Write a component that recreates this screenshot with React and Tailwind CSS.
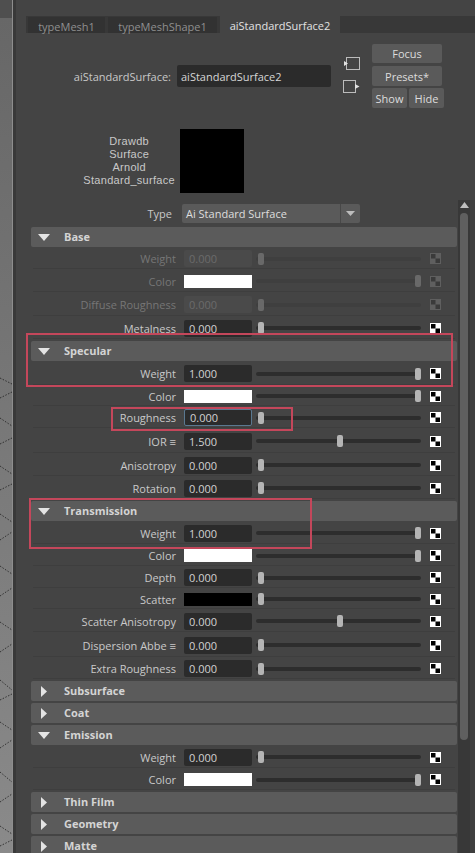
import React from 'react';

const font = "font-['Open_Sans','Liberation_Sans',sans-serif]";

const sections = [
  {
    title: 'Base',
    open: true,
    rows: [
      { label: 'Weight', value: '0.000', pos: 0, h: 22, dim: true },
      { label: 'Color', color: '#ffffff', pos: 1, h: 23, dim: true },
      { label: 'Diffuse Roughness', value: '0.000', pos: 0, h: 24, dim: true },
      { label: 'Metalness', value: '0.000', pos: 0, h: 23 },
    ],
  },
  {
    title: 'Specular',
    open: true,
    rows: [
      { label: 'Weight', value: '1.000', pos: 1, h: 24 },
      { label: 'Color', color: '#ffffff', pos: 1, h: 21 },
      { label: 'Roughness', value: '0.000', pos: 0, h: 22, focus: true },
      { label: 'IOR ≡', value: '1.500', pos: 0.5, h: 25 },
      { label: 'Anisotropy', value: '0.000', pos: 0, h: 23 },
      { label: 'Rotation', value: '0.000', pos: 0, h: 23 },
    ],
  },
  {
    title: 'Transmission',
    open: true,
    rows: [
      { label: 'Weight', value: '1.000', pos: 1, h: 23 },
      { label: 'Color', color: '#ffffff', pos: 1, h: 22 },
      { label: 'Depth', value: '0.000', pos: 0, h: 22 },
      { label: 'Scatter', color: '#000000', pos: 0, h: 21 },
      { label: 'Scatter Anisotropy', value: '0.000', pos: 0.5, h: 23 },
      { label: 'Dispersion Abbe ≡', value: '0.000', pos: 0, h: 25 },
      { label: 'Extra Roughness', value: '0.000', pos: 0, h: 22 },
    ],
  },
  { title: 'Subsurface' },
  { title: 'Coat' },
  {
    title: 'Emission',
    open: true,
    rows: [
      { label: 'Weight', value: '0.000', pos: 0, h: 23 },
      { label: 'Color', color: '#ffffff', pos: 1, h: 22 },
    ],
  },
  { title: 'Thin Film' },
  { title: 'Geometry' },
  { title: 'Matte' },
];

// wireframe edges visible in the viewport strip
const wires = [
  [378, 384], [398, 392], [418, 426], [444, 438], [466, 474], [490, 484],
  [514, 522], [540, 532], [566, 574], [596, 588], [622, 630], [652, 644],
  [680, 690], [700, 694], [722, 730], [748, 740], [772, 782], [802, 794],
  [826, 834], [846, 840],
];

function MapButton({ dim }) {
  const light = dim ? '#5f5f5f' : '#ffffff';
  const dark = dim ? '#3a3a3a' : '#000000';
  return (
    <svg width="11" height="11" viewBox="0 0 11 11">
      <rect width="11" height="11" fill={light} />
      <rect x="1" y="1" width="4.5" height="4.5" fill={dark} />
      <rect x="5.5" y="5.5" width="4.5" height="4.5" fill={dark} />
    </svg>
  );
}

function Slider({ pos, dim }) {
  return (
    <div className="relative ml-[4px] h-[12px] w-[165px]">
      <div
        className={`absolute left-0 right-0 top-[4px] h-[4px] rounded-full ${
          dim ? 'bg-[#3f3f3f]' : 'bg-[#2d2d2d]'
        }`}
      />
      <div
        className={`absolute top-0 h-[12px] w-[6px] rounded-[2px] ${
          dim ? 'bg-[#696969]' : 'bg-[#b4b4b4]'
        }`}
        style={{ left: 2 + pos * 157 }}
      />
    </div>
  );
}

function AttrRow({ row }) {
  const { label, value, color, pos, h, dim, focus } = row;
  return (
    <div
      className="flex items-center border-b border-[#3e3e3e] pt-[2px]"
      style={{ height: h }}
    >
      <div
        className={`w-[143px] pt-[2px] text-right text-[11px] ${
          dim ? 'text-[#767676]' : 'text-[#c9c9c9]'
        }`}
      >
        {label}
      </div>
      {color ? (
        <div className="ml-[8px] h-[13px] w-[68px]" style={{ background: color }} />
      ) : (
        <div
          className={`ml-[8px] flex h-[17px] w-[68px] items-center rounded-[2px] pl-[5px] pt-[2px] text-[11px] ${
            dim ? 'bg-[#4a4a4a] text-[#6b6b6b]' : 'bg-[#2b2b2b] text-[#d2d2d2]'
          } ${focus ? 'border border-[#5a7890]' : ''}`}
        >
          {value}
        </div>
      )}
      <Slider pos={pos} dim={dim} />
      <div className="ml-[9px] flex">
        <MapButton dim={dim} />
      </div>
    </div>
  );
}

function Section({ section }) {
  return (
    <div className="flex flex-col">
      <div className="flex h-[20px] items-center rounded-[2px] bg-[#5b5b5b]">
        <div className="flex w-[26px] justify-center">
          {section.open ? (
            <svg width="12" height="7" viewBox="0 0 12 7">
              <polygon points="0,0 12,0 6,7" fill="#e4e4e4" />
            </svg>
          ) : (
            <svg width="6" height="11" viewBox="0 0 6 11">
              <polygon points="0,0 6,5.5 0,11" fill="#e4e4e4" />
            </svg>
          )}
        </div>
        <span className="pl-[7px] pt-[1px] text-[11px] font-bold text-[#d4d4d4]">
          {section.title}
        </span>
      </div>
      {section.open && (
        <div className="mx-[2px] flex flex-col">
          {section.rows.map((row, i) => (
            <AttrRow key={i} row={row} />
          ))}
        </div>
      )}
    </div>
  );
}

function Button({ children, className }) {
  return (
    <div
      className={`flex items-center justify-center rounded-[2px] bg-[#5a5a5a] pt-[2px] text-[11px] text-[#dddddd] ${className}`}
    >
      {children}
    </div>
  );
}

export default function App() {
  return (
    <div className={`relative flex h-[853px] w-[475px] overflow-hidden bg-[#444444] ${font}`}>
      {/* viewport edge */}
      <div className="flex w-[12px] flex-col">
        <div className="h-[18px] bg-[#4f4f4f]" />
        <div className="relative flex-1 bg-linear-to-b from-[#676767] to-[#8a8a8a]">
          <svg className="absolute left-0 top-[-18px]" width="12" height="853">
            {wires.map(([a, b], i) => (
              <line
                key={i}
                x1="0"
                y1={a}
                x2="12"
                y2={b}
                stroke="#1e1e1e"
                strokeWidth="0.8"
                strokeDasharray="1.5 1.5"
              />
            ))}
          </svg>
        </div>
      </div>
      <div className="w-px bg-[#8e8e8e]" />
      <div className="w-[3px] bg-[#393939]" />

      {/* attribute editor */}
      <div className="flex w-[459px] flex-col">
        <div className="ml-[10px] mt-[16px] flex h-[17px] items-end bg-[#383838] pl-[2px] text-[11px]">
          <div className="flex h-[16px] w-[77px] items-center justify-center bg-[#323232] pt-[4px] text-[#8f8f8f]">
            typeMesh1
          </div>
          <div className="ml-[3px] flex h-[16px] w-[109px] items-center justify-center bg-[#323232] pt-[4px] text-[#8f8f8f]">
            typeMeshShape1
          </div>
          <div className="ml-[3px] flex h-[17px] w-[120px] items-center justify-center bg-[#444444] pt-[4px] text-[#e2e2e2]">
            aiStandardSurface2
          </div>
        </div>

        <div className="flex items-start pt-[11px]">
          <div className="mt-[21px] flex items-center">
            <div className="w-[155px] pt-[3px] text-right text-[11px] text-[#c8c8c8]">aiStandardSurface:</div>
            <div className="ml-[6px] flex h-[22px] w-[154px] items-center rounded-[2px] bg-[#2b2b2b] pl-[4px] pt-[3px] text-[11px] text-[#d6d6d6]">
              aiStandardSurface2
            </div>
          </div>
          <div className="ml-[12px] mt-[13px] flex w-[17px] flex-col gap-[10px]">
            <svg width="17" height="13" viewBox="0 0 17 13">
              <rect x="3.5" y="0.5" width="13" height="12" fill="none" stroke="#bcbcbc" />
              <polygon points="1,4 5,6.5 1,9" fill="#e2e2e2" />
            </svg>
            <svg width="17" height="13" viewBox="0 0 17 13">
              <rect x="0.5" y="0.5" width="12" height="12" fill="none" stroke="#bcbcbc" />
              <polygon points="12,4 16.5,6.5 12,9" fill="#e2e2e2" />
            </svg>
          </div>
          <div className="ml-[12px] flex w-[72px] flex-col">
            <Button className="h-[19px] w-[70px]">Focus</Button>
            <Button className="mt-[3px] h-[20px] w-[70px]">Presets*</Button>
            <div className="mt-[2px] flex gap-[2px]">
              <Button className="h-[20px] w-[35px]">Show</Button>
              <Button className="h-[20px] w-[35px]">Hide</Button>
            </div>
          </div>
        </div>

        <div className="mt-[21px] flex items-center">
          <div className="flex w-[159px] justify-end">
            <div className="text-center font-['Liberation_Sans',sans-serif] text-[11px] leading-[13px] tracking-[0.3px] text-[#c8c8c8]">
              <div>Drawdb</div>
              <div>Surface</div>
              <div>Arnold</div>
              <div>Standard_surface</div>
            </div>
          </div>
          <div className="ml-[5px] h-[64px] w-[64px] bg-black" />
        </div>

        <div className="mt-[7px] flex min-h-0 flex-1">
          <div className="flex w-[441px] flex-col">
            <div className="flex items-center pt-[4px]">
              <div className="w-[156px] pt-[2px] text-right text-[11px] text-[#c8c8c8]">Type</div>
              <div className="ml-[10px] flex h-[19px] w-[178px] items-center rounded-[2px] bg-[#5a5a5a]">
                <span className="flex-1 pl-[4px] pt-[2px] text-[11px] text-[#dedede]">Ai Standard Surface</span>
                <div className="h-full w-px bg-[#484848]" />
                <div className="flex w-[19px] justify-center">
                  <svg width="9" height="5" viewBox="0 0 9 5">
                    <polygon points="0,0 9,0 4.5,5" fill="#bdbdbd" />
                  </svg>
                </div>
              </div>
            </div>
            <div className="ml-[15px] mt-[4px] flex w-[426px] flex-col gap-[2px]">
              {sections.map((s) => (
                <Section key={s.title} section={s} />
              ))}
            </div>
          </div>

          <div className="ml-px flex w-[12px] flex-col items-center bg-[#383838]">
            <svg className="mt-[2px]" width="9" height="6" viewBox="0 0 9 6">
              <polygon points="0,6 9,6 4.5,0" fill="#bdbdbd" />
            </svg>
            <div className="mt-[5px] h-[527px] w-[8px] rounded-full bg-[#5f5f5f]" />
          </div>
          <div className="w-[5px] bg-[#3f3f3f]" />
        </div>
      </div>

      {/* review markers */}
      <div className="absolute left-[26px] top-[333px] h-[54px] w-[427px] border-2 border-[#c4475b]" />
      <div className="absolute left-[111px] top-[407px] h-[24px] w-[182px] border-2 border-[#c4475b]" />
      <div className="absolute left-[29px] top-[498px] h-[51px] w-[283px] border-2 border-[#c4475b]" />
    </div>
  );
}
